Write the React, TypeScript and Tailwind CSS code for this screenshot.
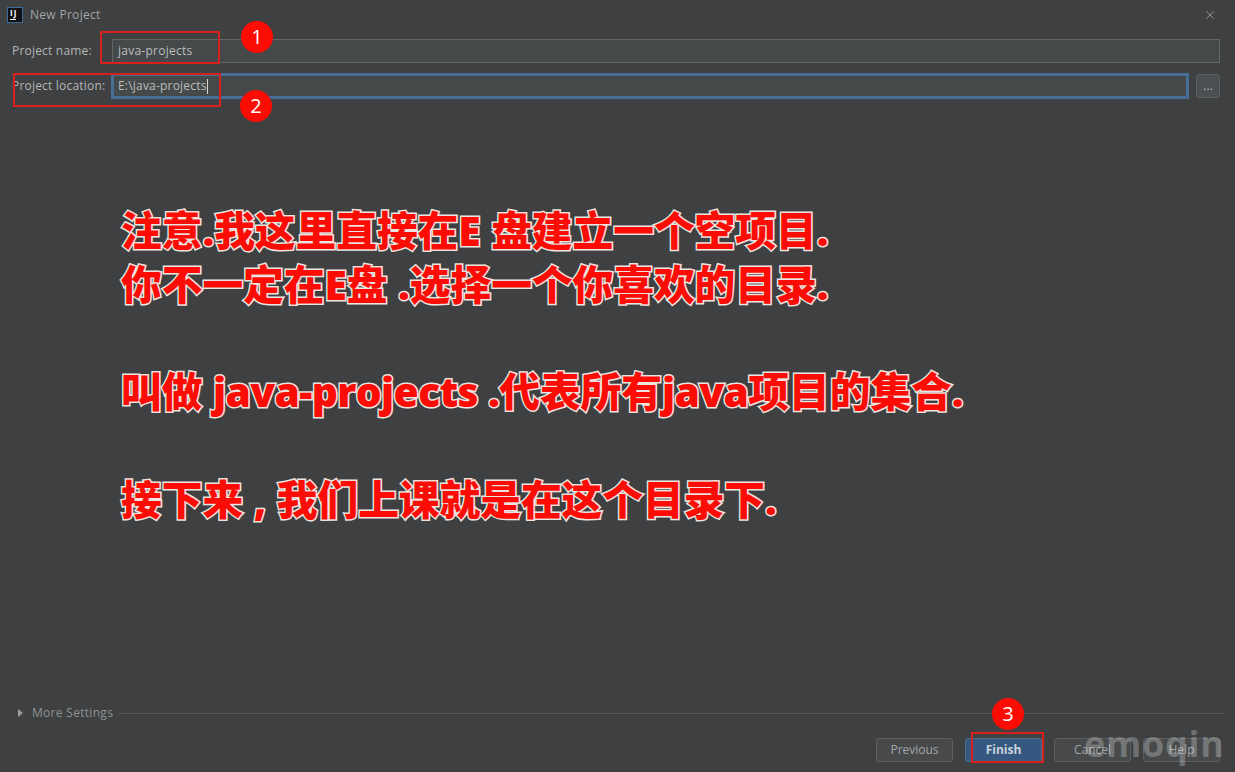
import { X } from 'lucide-react'

function Marker({ n, className }: { n: number; className: string }) {
  return (
    <div className={`absolute flex h-8 w-8 items-center justify-center rounded-full bg-[#fb0d05] text-[20px] text-white ${className}`}>
      {n}
    </div>
  )
}

function FooterButton({ label, primary }: { label: string; primary?: boolean }) {
  return (
    <button
      className={`h-[24px] w-[77px] rounded-[3px] border text-[12px] ${
        primary
          ? 'border-[#4c708c] bg-[#365880] font-bold text-[#c8d3dd]'
          : 'border-[#5e6060] bg-[#47494b] text-[#a4a6a6]'
      }`}
    >
      {label}
    </button>
  )
}

export default function App() {
  return (
    <div className="relative flex h-[772px] w-[1235px] flex-col overflow-hidden bg-[#3e4041] font-['Open_Sans','Noto_Sans_CJK_SC',sans-serif] text-[12px] text-[#b4b6b7]">
      <div className="flex h-[30px] items-center pl-[7px] pr-[18px]">
        <div className="relative h-[16px] w-[16px] border border-[#3d6b9f] bg-[#111] text-white">
          <span className="absolute left-[2px] top-[-1px] text-[8px] font-bold leading-[12px] tracking-[1px]">IJ</span>
          <span className="absolute bottom-[2px] left-[2px] h-px w-[6px] bg-white" />
        </div>
        <span className="ml-[7px] text-[12px] tracking-[0.3px] text-[#a3a5a6]">New Project</span>
        <X className="ml-auto h-[14px] w-[14px] text-[#b4b6b7]" strokeWidth={1.2} />
      </div>

      <div className="flex flex-col pl-[12px] pr-[15px] pt-[9px]">
        <div className="flex h-[24px] items-center">
          <label className="w-[100px] shrink-0 tracking-[0.2px]">Project name:</label>
          <div className="flex h-[24px] flex-1 items-center border border-[#646464] bg-[#46494a] pl-[5px] tracking-[0.25px] text-[#bbbdbe]">
            java-projects
          </div>
        </div>
        <div className="mt-[10px] flex h-[26px] items-center">
          <label className="w-[99px] shrink-0 tracking-[0.2px]">Project location:</label>
          <div className="flex h-[26px] flex-1 items-center border-[3px] border-[#466d94] bg-[#46494a] pl-[4px] tracking-[0.2px] text-[#bbbdbe]">
            E:\java-projects
            <span className="h-[15px] w-px bg-[#d8d8d8]" />
          </div>
          <button className="ml-[7px] h-[24px] w-[24px] rounded-[3px] border border-[#5e6060] bg-[#4c5052] text-[#b4b6b7]">...</button>
        </div>
      </div>

      <div className="flex-1 whitespace-pre pl-[121px] pt-[105px] font-['Open_Sans','Noto_Sans_CJK_SC',sans-serif] text-[40.7px] font-black leading-[53.8px] text-[#fb0d05] [-webkit-text-stroke:3px_#ece4e0] [paint-order:stroke_fill]">
        <div className="h-[53.8px]">注意.我这里直接在E 盘建立一个空项目.</div>
        <div className="h-[53.8px]">你不一定在E盘 .选择一个你喜欢的目录.</div>
        <div className="h-[53.8px]" />
        <div className="h-[53.8px]">
          叫做 <span className="tracking-[-0.6px]">java-projects .</span>代表所有<span className="tracking-[-0.6px]">java</span>项目的集合.
        </div>
        <div className="h-[53.8px]" />
        <div className="h-[53.8px]">接下来 , 我们上课就是在这个目录下.</div>
      </div>

      <div className="flex h-[30px] items-center pl-[18px] pr-[11px]">
        <span className="h-0 w-0 border-y-[4px] border-l-[5px] border-y-transparent border-l-[#9a9c9d]" />
        <span className="ml-[9px] tracking-[0.3px] text-[#8f9293]">More Settings</span>
        <div className="ml-[6px] h-px flex-1 bg-[#545657]" />
      </div>

      <div className="flex h-[44px] items-start justify-end gap-[12px] pr-[15px] pt-[10px]">
        <FooterButton label="Previous" />
        <FooterButton label="Finish" primary />
        <FooterButton label="Cancel" />
        <FooterButton label="Help" />
      </div>

      {/* annotations on top of the screenshot */}
      <div className="absolute left-[100px] top-[31px] h-[33px] w-[120px] border-2 border-[#d8211c]" />
      <div className="absolute left-[13px] top-[73px] h-[34px] w-[208px] border-2 border-[#d8211c]" />
      <div className="absolute left-[971px] top-[732px] h-[31px] w-[73px] border-2 border-[#d8211c]" />
      <Marker n={1} className="left-[241px] top-[21px]" />
      <Marker n={2} className="left-[240px] top-[90px]" />
      <Marker n={3} className="left-[992px] top-[698px]" />
      <div className="absolute left-[1084px] top-[720px] font-['Open_Sans',sans-serif] text-[36px] font-bold leading-[48px] tracking-[0.7px] text-white/25">
        emoqin
      </div>
    </div>
  )
}
